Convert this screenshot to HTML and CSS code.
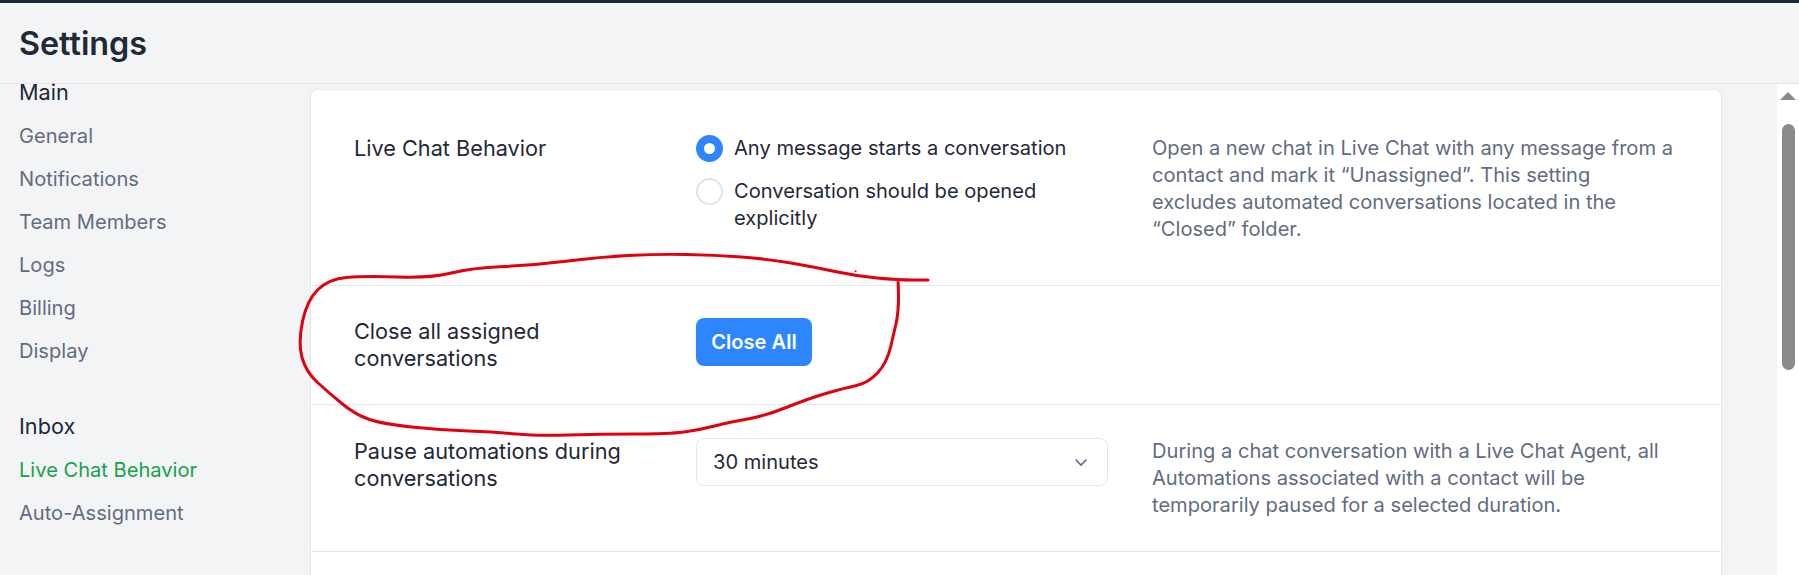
FILE: index.html
```html
<!DOCTYPE html>
<html lang="en">
  <head>
    <meta charset="UTF-8" />
    <meta name="viewport" content="width=device-width, initial-scale=1.0" />
    <title>Settings</title>
    <link rel="stylesheet" href="styles.css">
  </head>
  <body>
    <div class="topbar"></div>
    <header class="page-header">
      <h1>Settings</h1>
    </header>

    <div class="page-body">
      <nav class="sidebar">
        <div class="nav-title nav-title-first">Main</div>
        <a class="nav-item">General</a>
        <a class="nav-item">Notifications</a>
        <a class="nav-item">Team Members</a>
        <a class="nav-item">Logs</a>
        <a class="nav-item">Billing</a>
        <a class="nav-item">Display</a>
        <div class="nav-title">Inbox</div>
        <a class="nav-item active">Live Chat Behavior</a>
        <a class="nav-item">Auto-Assignment</a>
      </nav>

      <main class="content">
        <section class="card">
          <div class="row row-first">
            <div class="row-label">Live Chat Behavior</div>
            <div class="radio-group">
              <label class="radio-option">
                <span class="radio checked"></span>
                <span>Any message starts a conversation</span>
              </label>
              <label class="radio-option">
                <span class="radio"></span>
                <span>Conversation should be opened explicitly</span>
              </label>
            </div>
            <p class="row-desc">Open a new chat in Live Chat with any message from a contact and mark it “Unassigned”. This setting excludes automated conversations located in the “Closed” folder.</p>
          </div>

          <div class="row row-action">
            <div class="row-label">Close all assigned conversations</div>
            <div><button class="btn-primary">Close All</button></div>
          </div>

          <div class="row">
            <div class="row-label">Pause automations during conversations</div>
            <div class="select">
              <span>30 minutes</span>
              <svg class="chevron" viewBox="0 0 14 9" width="14" height="9">
                <path d="M1.5 1.5 7 7l5.5-5.5" />
              </svg>
            </div>
            <p class="row-desc">During a chat conversation with a Live Chat Agent, all Automations associated with a contact will be temporarily paused for a selected duration.</p>
          </div>
        </section>
      </main>

      <div class="scrollbar">
        <div class="scroll-arrow"></div>
        <div class="scroll-thumb"></div>
      </div>
    </div>

    <!-- hand drawn marker around the Close All row -->
    <svg class="scribble" width="1799" height="575">
      <path d="M928 280 L913 280 Q898 280 877 278 Q856 276 835 271.5 Q814 267 791 263 Q768 259 741.5 257 Q715 255 686 254.5 Q657 254 628.5 255.5 Q600 257 568 261 Q536 265 503.5 266.5 Q471 268 451.5 273 Q432 278 398 277 Q364 276 346.5 277.5 Q329 279 318 289.5 Q307 300 302.5 321.5 Q298 343 302 357.5 Q306 372 317.5 382.5 Q329 393 342.5 404 Q356 415 369.5 419.5 Q383 424 411.5 427 Q440 430 468.5 431 Q497 432 516.5 434 Q536 436 568 435 Q600 434 634.5 434 Q669 434 684 432 Q699 430 714.5 426 Q730 422 747.5 419 Q765 416 787.5 407 Q810 398 827.5 393 Q845 388 856.5 385.5 Q868 383 877.5 373 Q887 363 891 345.5 Q895 328 896 324 Q897 320 898 310 Q899 300 898 280" />
      <circle cx="855.6" cy="271.3" r="1" />
    </svg>
  </body>
</html>
```

FILE: styles.css
```css
* {
  box-sizing: border-box;
}

html,
body {
  height: 100%;
}

body {
  margin: 0;
  position: relative;
  display: flex;
  flex-direction: column;
  overflow: hidden;
  font-family: Inter, "Liberation Sans", sans-serif;
  font-size: 20.1px;
  line-height: 27px;
  color: #1f2937;
  background: #f3f4f6;
}

.topbar {
  height: 3px;
  background: #1f2937;
}

.page-header {
  height: 81px;
  padding: 0 19px;
  display: flex;
  align-items: center;
  border-bottom: 1px solid #e5e7eb;
}

h1 {
  margin: 2px 0 0;
  font-size: 32.3px;
  line-height: 36px;
  font-weight: 600;
}

.page-body {
  flex: 1;
  display: flex;
  min-height: 0;
}

.sidebar {
  width: 310px;
  flex-shrink: 0;
  padding-left: 19px;
}

.nav-title {
  height: 43px;
  line-height: 43px;
  margin-top: 32px;
  margin-bottom: 1px;
  font-size: 21.7px;
}

.nav-title-first {
  height: 16px;
  line-height: 16px;
  margin-top: 0;
  margin-bottom: 15px;
}

.nav-item {
  display: block;
  height: 43px;
  line-height: 43px;
  color: #626c80;
}

.nav-item.active {
  color: #16a34a;
}

.content {
  flex: 1;
  padding: 5px 55px 0 0;
  min-width: 0;
}

.card {
  height: 100%;
  background: white;
  border: 1px solid #e5e7eb;
  border-bottom: none;
  border-radius: 8px 8px 0 0;
}

.row {
  display: grid;
  grid-template-columns: 298px 412px 1fr;
  column-gap: 44px;
  padding: 33px 42px 32px 43px;
  border-bottom: 1px solid #e5e7eb;
}

.row-first {
  padding-top: 45px;
  padding-bottom: 42px;
}

.row-action {
  padding-top: 32px;
}

.row-label {
  font-size: 21.7px;
}

.row-desc {
  margin: 0;
  color: #626c80;
}

.radio-group {
  display: flex;
  flex-direction: column;
  gap: 16px;
}

.radio-option {
  display: flex;
  gap: 11px;
}

.radio {
  width: 27px;
  height: 27px;
  flex-shrink: 0;
  border: 2px solid #e2e3e6;
  border-radius: 50%;
  background: white;
}

.radio.checked {
  border: 8px solid #2e86ff;
}

.btn-primary {
  display: block;
  width: 116px;
  height: 48px;
  padding: 0;
  border: none;
  border-radius: 8px;
  background: #2e86ff;
  color: white;
  font: inherit;
  font-weight: 600;
}

.select {
  height: 48px;
  padding: 0 16px;
  display: flex;
  align-items: center;
  justify-content: space-between;
  border: 1px solid #e5e7eb;
  border-radius: 8px;
}

.chevron {
  margin-right: 3px;
}

.chevron path {
  fill: none;
  stroke: #626c80;
  stroke-width: 1.6;
}

.scrollbar {
  width: 22px;
  flex-shrink: 0;
  padding-top: 8px;
  background: white;
  display: flex;
  flex-direction: column;
  align-items: center;
}

.scroll-arrow {
  width: 0;
  height: 0;
  border-left: 8px solid transparent;
  border-right: 8px solid transparent;
  border-bottom: 8px solid #8a8a8a;
}

.scroll-thumb {
  width: 13px;
  height: 246px;
  margin-top: 24px;
  border-radius: 7px;
  background: #8a8a8a;
}

.scribble {
  position: absolute;
  top: 0;
  left: 0;
  pointer-events: none;
}

.scribble path {
  fill: none;
  stroke: #e0000f;
  stroke-width: 3;
  stroke-linecap: round;
}

.scribble circle {
  fill: #e0000f;
}
```
